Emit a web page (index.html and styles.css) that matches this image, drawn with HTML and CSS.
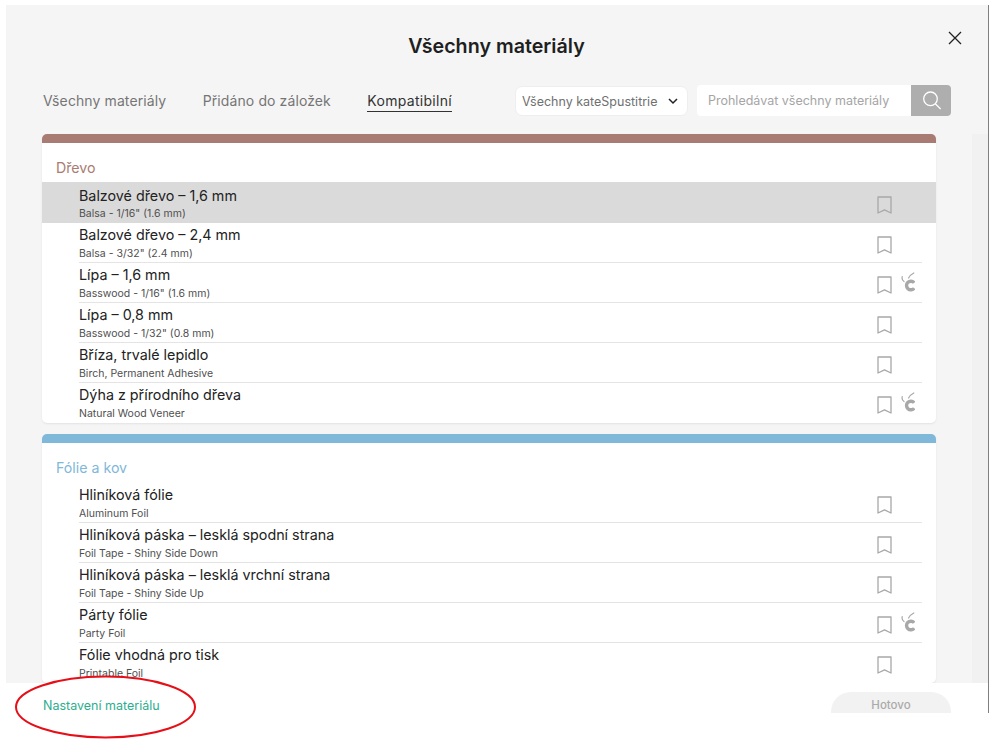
FILE: index.html
```html
<!DOCTYPE html>
<html lang="cs">
<head>
<meta charset="utf-8">
<title>Všechny materiály</title>
<link rel="stylesheet" href="styles.css">
</head>
<body>
<svg class="defs" width="0" height="0" aria-hidden="true">
  <symbol id="bm" viewBox="0 0 15 18"><path d="M1 1h13v16l-6.5-3.2L1 17z" fill="none" stroke="currentColor" stroke-width="1.3" stroke-linejoin="round"/></symbol>
  <symbol id="cr" viewBox="0 0 14 20"><path d="M13.2 10.8A4.3 4.3 0 1 0 13.2 16.2" fill="none" stroke="currentColor" stroke-width="3.4"/><path d="M1.2 4.5C.8 6.5 1.3 8.5 3 9.6M12.8 1C10.8 2 8.8 3.6 7.6 6" fill="none" stroke="currentColor" stroke-width="1.2" stroke-linecap="round"/></symbol>
</svg>
<div class="dialog">
  <main class="main">
    <header class="head"><h1 class="title">Všechny materiály</h1>
      <svg class="close" width="14" height="14" viewBox="0 0 14 14"><path d="M1 1l12 12M13 1L1 13" stroke="#222" stroke-width="1.3" fill="none"/></svg>
    </header>
    <div class="toolbar">
      <nav class="tabs">
        <span class="tab">Všechny materiály</span>
        <span class="tab">Přidáno do záložek</span>
        <span class="tab active">Kompatibilní</span>
      </nav>
      <div class="select"><span>Všechny kateSpustitrie</span>
        <svg width="10" height="7" viewBox="0 0 10 7"><path d="M1 1l4 4 4-4" fill="none" stroke="#222" stroke-width="1.5"/></svg>
      </div>
      <div class="search"><span class="placeholder">Prohledávat všechny materiály</span>
        <span class="search-btn"><svg width="20" height="20" viewBox="0 0 20 20"><circle cx="9.5" cy="7.8" r="6.8" fill="none" stroke="#fff" stroke-width="1.3"/><path d="M14.3 12.7l5.4 5.4" stroke="#fff" stroke-width="1.3"/></svg></span>
      </div>
    </div>
    <div class="scroller">
      <div class="list">
        <section class="card wood">
          <h2 class="cat">Dřevo</h2>
          <div class="row selected"><div class="txt"><div class="name">Balzové dřevo – 1,6 mm</div><div class="sub">Balsa - 1/16" (1.6 mm)</div></div><svg class="bm"><use href="#bm"/></svg></div>
          <div class="row"><div class="txt"><div class="name">Balzové dřevo – 2,4 mm</div><div class="sub">Balsa - 3/32" (2.4 mm)</div></div><svg class="bm"><use href="#bm"/></svg></div>
          <div class="row"><div class="txt"><div class="name">Lípa – 1,6 mm</div><div class="sub">Basswood - 1/16" (1.6 mm)</div></div><svg class="bm"><use href="#bm"/></svg><svg class="cr"><use href="#cr"/></svg></div>
          <div class="row"><div class="txt"><div class="name">Lípa – 0,8 mm</div><div class="sub">Basswood - 1/32" (0.8 mm)</div></div><svg class="bm"><use href="#bm"/></svg></div>
          <div class="row"><div class="txt"><div class="name">Bříza, trvalé lepidlo</div><div class="sub">Birch, Permanent Adhesive</div></div><svg class="bm"><use href="#bm"/></svg></div>
          <div class="row last"><div class="txt"><div class="name">Dýha z přírodního dřeva</div><div class="sub">Natural Wood Veneer</div></div><svg class="bm"><use href="#bm"/></svg><svg class="cr"><use href="#cr"/></svg></div>
        </section>
        <section class="card foil">
          <h2 class="cat">Fólie a kov</h2>
          <div class="row"><div class="txt"><div class="name">Hliníková fólie</div><div class="sub">Aluminum Foil</div></div><svg class="bm"><use href="#bm"/></svg></div>
          <div class="row"><div class="txt"><div class="name">Hliníková páska – lesklá spodní strana</div><div class="sub">Foil Tape - Shiny Side Down</div></div><svg class="bm"><use href="#bm"/></svg></div>
          <div class="row"><div class="txt"><div class="name">Hliníková páska – lesklá vrchní strana</div><div class="sub">Foil Tape - Shiny Side Up</div></div><svg class="bm"><use href="#bm"/></svg></div>
          <div class="row"><div class="txt"><div class="name">Párty fólie</div><div class="sub">Party Foil</div></div><svg class="bm"><use href="#bm"/></svg><svg class="cr"><use href="#cr"/></svg></div>
          <div class="row last"><div class="txt"><div class="name">Fólie vhodná pro tisk</div><div class="sub">Printable Foil</div></div><svg class="bm"><use href="#bm"/></svg></div>
        </section>
      </div>
      <div class="track"></div>
    </div>
  </main>
  <footer class="foot">
    <span class="link">Nastavení materiálu</span>
    <span class="done">Hotovo</span>
  </footer>
</div>
<svg class="ring" width="186" height="66" viewBox="0 0 186 66"><ellipse cx="92.5" cy="33" rx="89.5" ry="30.5" fill="none" stroke="#e60f18" stroke-width="2"/></svg>
</body>
</html>
```
FILE: styles.css
```css
* { box-sizing: border-box; }
html, body { margin: 0; height: 100%; background: #fff; overflow: hidden; }
body { padding: 5px 0 0 6px; font-family: "Inter", "Liberation Sans", sans-serif; color: #222; position: relative; }
.defs { position: absolute; }
.dialog { width: 983px; height: 708px; border-right: 1.5px solid #808080; display: flex; flex-direction: column; overflow: hidden; }
.main { height: 678px; flex: none; background: #f5f5f5; display: flex; flex-direction: column; overflow: hidden; position: relative; }
.head { height: 80px; flex: none; padding-top: 29px; text-align: center; }
.title { margin: 0 0 0 -1px; font-size: 19.7px; line-height: 24px; font-weight: 600; color: #1f1f1f; }
.close { position: absolute; left: 942px; top: 26px; }
.toolbar { height: 49px; flex: none; display: flex; align-items: flex-start; padding: 0 37px 0 37px; }
.tabs { display: flex; gap: 36.5px; margin-top: 7px; flex: 1; }
.tab { font-size: 14px; letter-spacing: .1px; line-height: 18px; color: #757575; padding: 0 0 1px; }
.tab.active { color: #333; letter-spacing: .3px; border-bottom: 1px solid #333; }
.select { width: 173px; height: 30px; margin: 1px 9.5px 0 0; padding: 0 9px 0 6.5px; background: #fff; border-radius: 7px; border: 1px solid #eee; display: flex; align-items: center; justify-content: space-between; font-size: 12.5px; color: #707070; white-space: nowrap; }
.search { width: 254px; height: 31px; display: flex; background: #fff; border-radius: 4px; overflow: hidden; }
.placeholder { flex: 1; font-size: 12.5px; line-height: 31px; padding-left: 11px; color: #a5a5a5; white-space: nowrap; }
.search-btn { width: 40px; background: #aeaeae; display: flex; align-items: center; justify-content: center; }
.scroller { flex: 1; min-height: 0; display: flex; justify-content: space-between; padding-left: 36px; }
.list { width: 894px; display: flex; flex-direction: column; gap: 11px; }
.track { width: 16px; background: #f1f1f1; }
.card { height: 289px; flex: none; background: #fff; border-top: 9px solid #a97c73; border-radius: 5px; box-shadow: 0 1px 2px rgba(0,0,0,.08); overflow: hidden; }
.card.foil { height: 249px; border-top-color: #80b8da; }
.cat { margin: 0; height: 40px; padding: 16px 0 0 14px; font-size: 14.2px; line-height: 18px; font-weight: 400; }
.wood .cat { color: #a97c73; }
.foil .cat { color: #80b8da; }
.row { height: 40px; margin: 0 14px 0 37px; border-bottom: 1px solid #e4e4e4; position: relative; padding-top: 3px; }
.row.last { border-bottom: 0; }
.row.selected { margin: -1px 0 0; padding: 5px 14px 0 37px; height: 41px; background: #dadada; border-bottom: 0; }
.name { font-size: 14.3px; line-height: 18px; color: #222; white-space: nowrap; }
.sub { font-size: 10.5px; line-height: 14px; margin-top: 3px; color: #4f4f4f; white-space: nowrap; }
.selected .sub { margin-top: 2px; }
.bm { position: absolute; left: 798px; top: 13px; width: 15px; height: 18px; color: #a8a8a8; }
.selected .bm { left: 835px; top: 14px; }
.cr { position: absolute; left: 822px; top: 9px; width: 14px; height: 20px; color: #a8a8a8; }
.foot { flex: 1; display: flex; justify-content: space-between; padding: 9px 37px 0 37px; background: #fff; }
.link { font-size: 12.5px; line-height: 27px; color: #2bae8e; }
.done { width: 120px; height: 40px; border-radius: 20px; background: #f2f2f2; color: #aaa; font-size: 11.5px; font-weight: 500; text-align: center; line-height: 27px; }
.ring { position: absolute; left: 13px; top: 674px; }
```
